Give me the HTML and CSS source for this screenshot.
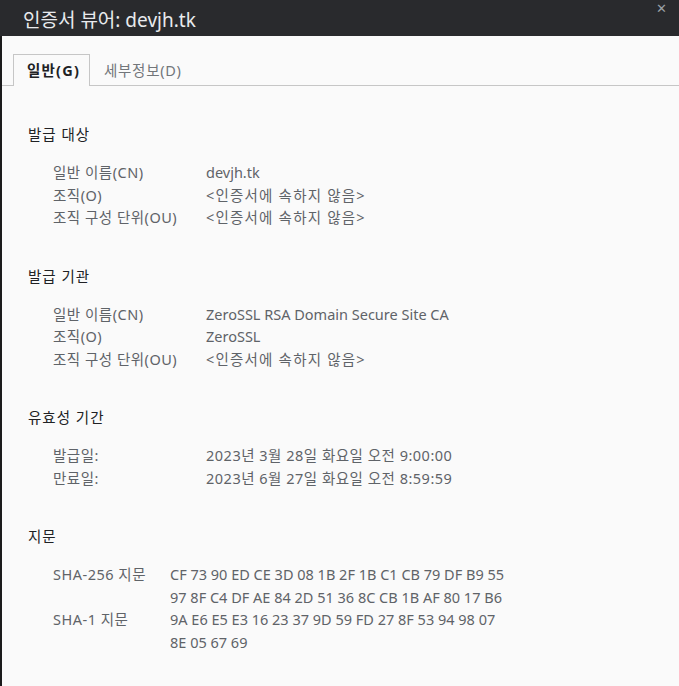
FILE: index.html
```html
<!DOCTYPE html>
<html lang="ko">
  <head>
    <meta charset="UTF-8" />
    <meta name="viewport" content="width=device-width, initial-scale=1.0" />
    <title>인증서 뷰어</title>
    <link rel="stylesheet" href="styles.css">
  </head>
  <body>
    <header class="titlebar">
      <h1>인증서 뷰어: devjh.tk</h1>
      <span class="titlebar__close">✕</span>
    </header>

    <main class="viewer">
      <nav class="tabs">
        <span class="tabs__item tabs__item--active">일반(G)</span>
        <span class="tabs__item">세부정보(D)</span>
      </nav>

      <section class="cert__section">
        <h2>발급 대상</h2>
        <dl class="cert__rows">
          <dt>일반 이름(CN)</dt>
          <dd class="latin">devjh.tk</dd>
          <dt>조직(O)</dt>
          <dd class="empty">&lt;인증서에 속하지 않음&gt;</dd>
          <dt>조직 구성 단위(OU)</dt>
          <dd class="empty">&lt;인증서에 속하지 않음&gt;</dd>
        </dl>
      </section>

      <section class="cert__section">
        <h2>발급 기관</h2>
        <dl class="cert__rows">
          <dt>일반 이름(CN)</dt>
          <dd class="latin">ZeroSSL RSA Domain Secure Site CA</dd>
          <dt>조직(O)</dt>
          <dd class="latin">ZeroSSL</dd>
          <dt>조직 구성 단위(OU)</dt>
          <dd class="empty">&lt;인증서에 속하지 않음&gt;</dd>
        </dl>
      </section>

      <section class="cert__section">
        <h2>유효성 기간</h2>
        <dl class="cert__rows">
          <dt>발급일:</dt>
          <dd>2023년 3월 28일 화요일 오전 9:00:00</dd>
          <dt>만료일:</dt>
          <dd>2023년 6월 27일 화요일 오전 8:59:59</dd>
        </dl>
      </section>

      <section class="cert__section">
        <h2>지문</h2>
        <dl class="cert__rows cert__rows--hash">
          <dt>SHA-256 지문</dt>
          <dd class="latin">CF 73 90 ED CE 3D 08 1B 2F 1B C1 CB 79 DF B9 55<br />97 8F C4 DF AE 84 2D 51 36 8C CB 1B AF 80 17 B6</dd>
          <dt>SHA-1 지문</dt>
          <dd class="latin">9A E6 E5 E3 16 23 37 9D 59 FD 27 8F 53 94 98 07<br />8E 05 67 69</dd>
        </dl>
      </section>
    </main>
  </body>
</html>
```

FILE: styles.css
```css
* {
  margin: 0;
  padding: 0;
  box-sizing: border-box;
}
html {
  font-family: "Noto Sans", "Noto Sans CJK KR", sans-serif;
}
body {
  background-color: #1b1b1c;
  height: 686px;
  overflow: hidden;
}

.titlebar {
  display: flex;
  justify-content: space-between;
  align-items: flex-start;
  height: 36px;
  padding-left: 23px;
  background-color: #292a2d;
  color: #e8eaed;
}
.titlebar h1 {
  font-size: 19px;
  font-weight: 400;
  line-height: 42px;
  margin-top: -1px;
}
.titlebar__close {
  font-size: 13px;
  line-height: 14px;
  color: #9aa0a6;
  margin: 1px 12px 0 0;
}

.viewer {
  margin-left: 2px;
  height: 650px;
  background-color: #fafafa;
  padding-top: 18px;
}

.tabs {
  display: flex;
  padding-left: 11px;
  border-bottom: 1px solid #c6c6c6;
  height: 32px;
  margin-bottom: 37px;
}
.tabs__item {
  font-size: 14.5px;
  letter-spacing: 0.7px;
  line-height: 30px;
  padding: 0 11px 0 13px;
  color: #72767a;
  border: 1px solid transparent;
  border-bottom: none;
}
.tabs__item--active {
  font-weight: 700;
  letter-spacing: 1.2px;
  color: #202124;
  border-color: #c6c6c6;
  background-color: #fafafa;
  height: 32px;
  padding-right: 9px;
}

.cert__section {
  padding-left: 26px;
  margin-bottom: 36px;
  font-size: 14.5px;
  line-height: 22.5px;
}
.cert__section h2 {
  font-size: 14.5px;
  font-weight: 400;
  line-height: 22px;
  letter-spacing: 1px;
  color: #202124;
  margin-bottom: 16px;
}
.cert__rows {
  display: grid;
  grid-template-columns: 153px auto;
  padding-left: 25px;
  color: #5f6368;
  letter-spacing: 0.5px;
}
.cert__rows--hash {
  grid-template-columns: 117px auto;
}
.cert__rows dd {
  white-space: nowrap;
}
.cert__rows .latin {
  letter-spacing: 0;
}
.cert__rows .empty {
  letter-spacing: 1.2px;
}
```
